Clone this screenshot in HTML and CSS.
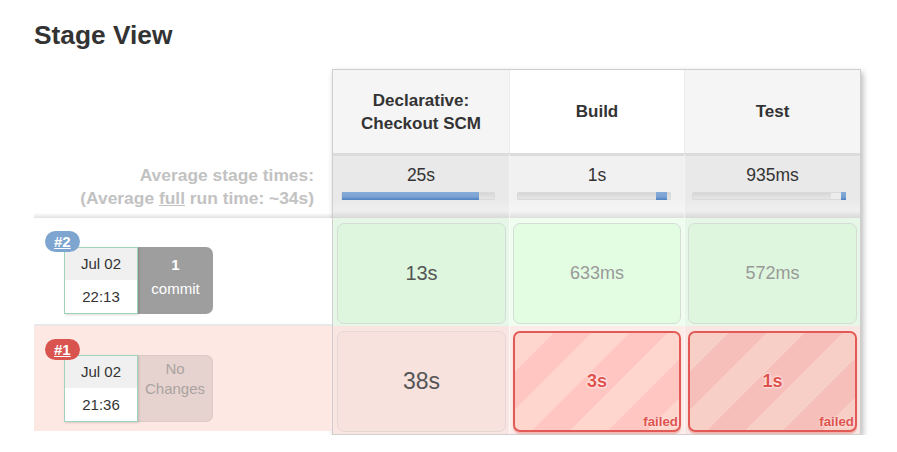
FILE: index.html
```html
<!DOCTYPE html>
<html>
<head>
<meta charset="utf-8">
<link rel="stylesheet" href="styles.css">
</head>
<body>
<div class="page">
  <h2 class="title">Stage View</h2>
  <div class="stage-view">
    <div class="labels">
      <div class="lab-head"></div>
      <div class="lab-avg">
        <div>Average stage times:</div>
        <div>(Average <u>full</u> run time: ~34s)</div>
      </div>
      <div class="lab-build ok">
        <span class="badge blue">#2</span>
        <div class="build-card">
          <div class="date">
            <div class="d">Jul 02</div>
            <div class="t">22:13</div>
          </div>
          <div class="changes has"><b>1</b><span>commit</span></div>
        </div>
      </div>
      <div class="lab-build bad">
        <span class="badge red">#1</span>
        <div class="build-card">
          <div class="date">
            <div class="d">Jul 02</div>
            <div class="t">21:36</div>
          </div>
          <div class="changes none"><span>No</span><span>Changes</span></div>
        </div>
      </div>
    </div>
    <div class="stages">
      <div class="head c1"><span>Declarative:<br>Checkout SCM</span></div>
      <div class="head c2"><span>Build</span></div>
      <div class="head c3"><span>Test</span></div>

      <div class="avg c1">
        <div class="avg-time">25s</div>
        <div class="bar"><span class="fill" style="left:0;width:137px"></span></div>
      </div>
      <div class="avg c2">
        <div class="avg-time">1s</div>
        <div class="bar"><span class="fill" style="left:138px;width:11px"></span></div>
      </div>
      <div class="avg c3">
        <div class="avg-time">935ms</div>
        <div class="bar"><span class="light" style="left:138px;width:10px"></span><span class="fill" style="left:148px;width:5px"></span></div>
      </div>

      <div class="cell ok c1"><div class="box"><span class="dur big20">13s</span></div></div>
      <div class="cell ok c2"><div class="box"><span class="dur small">633ms</span></div></div>
      <div class="cell ok c3"><div class="box"><span class="dur small">572ms</span></div></div>

      <div class="cell bad c1"><div class="box"><span class="dur big23">38s</span></div></div>
      <div class="cell bad c2"><div class="box failed"><span class="dur">3s</span><span class="flabel">failed</span></div></div>
      <div class="cell bad c3"><div class="box failed"><span class="dur">1s</span><span class="flabel">failed</span></div></div>
    </div>
  </div>
</div>
</body>
</html>
```
FILE: styles.css
```css
html, body {
  margin: 0;
  padding: 0;
  background: #fff;
}
body {
  font-family: "Liberation Sans", Arial, sans-serif;
  color: #333;
}
.page {
  padding-left: 34px;
}
.title {
  margin: 20px 0 0 0;
  font-size: 26.3px;
  line-height: 30px;
  font-weight: bold;
  color: #333;
}
.stage-view {
  margin-top: 19px;
  display: flex;
  align-items: flex-start;
}

/* left label column */
.labels {
  width: 298px;
  display: flex;
  flex-direction: column;
}
.lab-head {
  height: 84px;
}
.lab-avg {
  height: 65px;
  box-sizing: border-box;
  padding: 11px 18px 0 0;
  text-align: right;
  font-size: 17.4px;
  line-height: 23px;
  font-weight: bold;
  color: #c2c2c2;
  background: linear-gradient(to bottom, #fff 0, #fff 92%, #e2e2e2 100%);
}
.lab-avg u {
  text-decoration-thickness: 1px;
}
.lab-build {
  position: relative;
  box-sizing: border-box;
  padding: 29px 0 0 30px;
}
.lab-build.ok {
  height: 108px;
  background: #fff;
  border-bottom: 2px solid #e8e8e8;
}
.lab-build.bad {
  height: 105px;
  background: #fde8e4;
}
.badge {
  position: absolute;
  left: 11px;
  top: 13px;
  z-index: 2;
  height: 21px;
  line-height: 21px;
  padding: 0 9px;
  border-radius: 11px;
  color: #fff;
  font-size: 15px;
  font-weight: bold;
  text-decoration: underline;
}
.badge.blue { background: #7da5d0; }
.badge.red { background: #d9534f; }
.build-card {
  display: flex;
  height: 67px;
}
.date {
  position: relative;
  z-index: 1;
  width: 72px;
  border: 1px solid #9fd3ba;
  background: #fff;
  box-shadow: 1px 1px 2px rgba(0,0,0,0.15);
  font-size: 15px;
  text-align: center;
  color: #333;
}
.date .d {
  height: 32px;
  line-height: 32px;
  background: #f0f0f0;
}
.date .t {
  height: 33px;
  line-height: 33px;
}
.changes {
  width: 75px;
  border-radius: 0 7px 7px 0;
  display: flex;
  flex-direction: column;
  align-items: center;
  font-size: 15px;
  box-sizing: border-box;
}
.changes.has {
  background: #9e9e9e;
  color: #fff;
  padding-top: 6px;
  line-height: 24px;
}
.changes.none {
  background: #e6d3cf;
  color: #aaa3a1;
  padding-top: 3px;
  line-height: 20px;
  border: 1px solid #dccac6;
  border-left: none;
}

/* stage table */
.stages {
  display: grid;
  grid-template-columns: 176px 175px 176px;
  grid-template-rows: 83px 65px 108px 108px;
  border: 1px solid #cfcfcf;
  box-shadow: 2px 3px 6px rgba(0,0,0,0.28);
}
.head {
  display: flex;
  align-items: center;
  justify-content: center;
  text-align: center;
  font-size: 17px;
  line-height: 23px;
  font-weight: bold;
  color: #333;
  border-left: 1px solid #ececec;
}
.head.c1 { background: #f5f5f5; border-left: none; }
.head.c2 { background: #fff; }
.head.c3 { background: #f5f5f5; }

.avg {
  box-sizing: border-box;
  border-top: 3px solid #dcdcdc;
  border-left: 1px solid #f4f4f4;
  padding-top: 8px;
  text-align: center;
}
.avg.c1 { background: linear-gradient(to bottom, #e9e9e9 0, #e9e9e9 70%, #efefef 88%, #d9d9d9 100%); border-left: none; }
.avg.c2 { background: linear-gradient(to bottom, #f1f1f1 0, #f1f1f1 70%, #f5f5f5 88%, #dedede 100%); }
.avg.c3 { background: linear-gradient(to bottom, #e9e9e9 0, #e9e9e9 70%, #efefef 88%, #d9d9d9 100%); }
.avg-time {
  font-size: 17.5px;
  line-height: 22px;
  color: #333;
}
.bar {
  position: relative;
  margin: 6px 0 0 8px;
  width: 152px;
  height: 6px;
  background: linear-gradient(to bottom, #d6d6d6, #e6e6e6);
  border: 1px solid #dadada;
  border-radius: 1px;
}
.avg.c2 .bar, .avg.c3 .bar { margin-left: 7px; }
.bar .fill {
  position: absolute;
  top: -1px;
  bottom: -1px;
  background: linear-gradient(to bottom, #86abd8 0, #7aa2d3 60%, #4d7fc0 100%);
}
.bar .light {
  position: absolute;
  top: 0;
  bottom: 0;
  background: #ececec;
}

.cell {
  box-sizing: border-box;
  padding: 5px 3px 2px 3px;
  border-left: 1px solid rgba(255,255,255,0.6);
}
.cell.c1 { border-left: none; padding-left: 4px; }
.cell.ok.c1 { background: #e7f7e7; }
.cell.ok.c2 { background: #effdef; }
.cell.ok.c3 { background: #e7f7e7; }
.cell.bad.c1 { background: #f9e6e2; }
.cell.bad.c2 { background: #fcebe7; }
.cell.bad.c3 { background: #f9e6e2; }

.box {
  position: relative;
  height: 101px;
  box-sizing: border-box;
  border: 1px solid #d6dcd6;
  border-radius: 7px;
  display: flex;
  align-items: center;
  justify-content: center;
}
.cell.ok.c1 .box { background: #ddf6dd; }
.cell.ok.c2 .box { background: #e3fde3; }
.cell.ok.c3 .box { background: #ddf6dd; }
.cell.bad.c1 .box { background: #f7e2de; border-color: #e6d7d4; }

.dur {
  font-size: 18px;
  color: #555;
}
.dur.big20 { font-size: 20px; color: #555; }
.dur.big23 { font-size: 23px; color: #555; }
.dur.small { font-size: 18px; color: #999; }

.box.failed {
  border: 2px solid #e25a55;
  box-shadow: 0 2px 1px rgba(220,90,85,0.35);
  background: repeating-linear-gradient(135deg, #ffd6ce 0, #ffd6ce 27px, #ffc6c2 27px, #ffc6c2 54px);
}
.cell.c3 .box.failed {
  background: repeating-linear-gradient(135deg, #f8cfc6 0, #f8cfc6 27px, #f7bfba 27px, #f7bfba 54px);
}
.box.failed .dur {
  font-weight: bold;
  font-size: 18px;
  color: #e0514d;
  text-shadow: 0 0 3px #fff, 0 0 2px #fff;
}
.flabel {
  position: absolute;
  right: 1px;
  bottom: 1px;
  font-size: 13.3px;
  font-weight: bold;
  color: #e0514d;
  text-shadow: 0 0 2px #fff;
}
```
